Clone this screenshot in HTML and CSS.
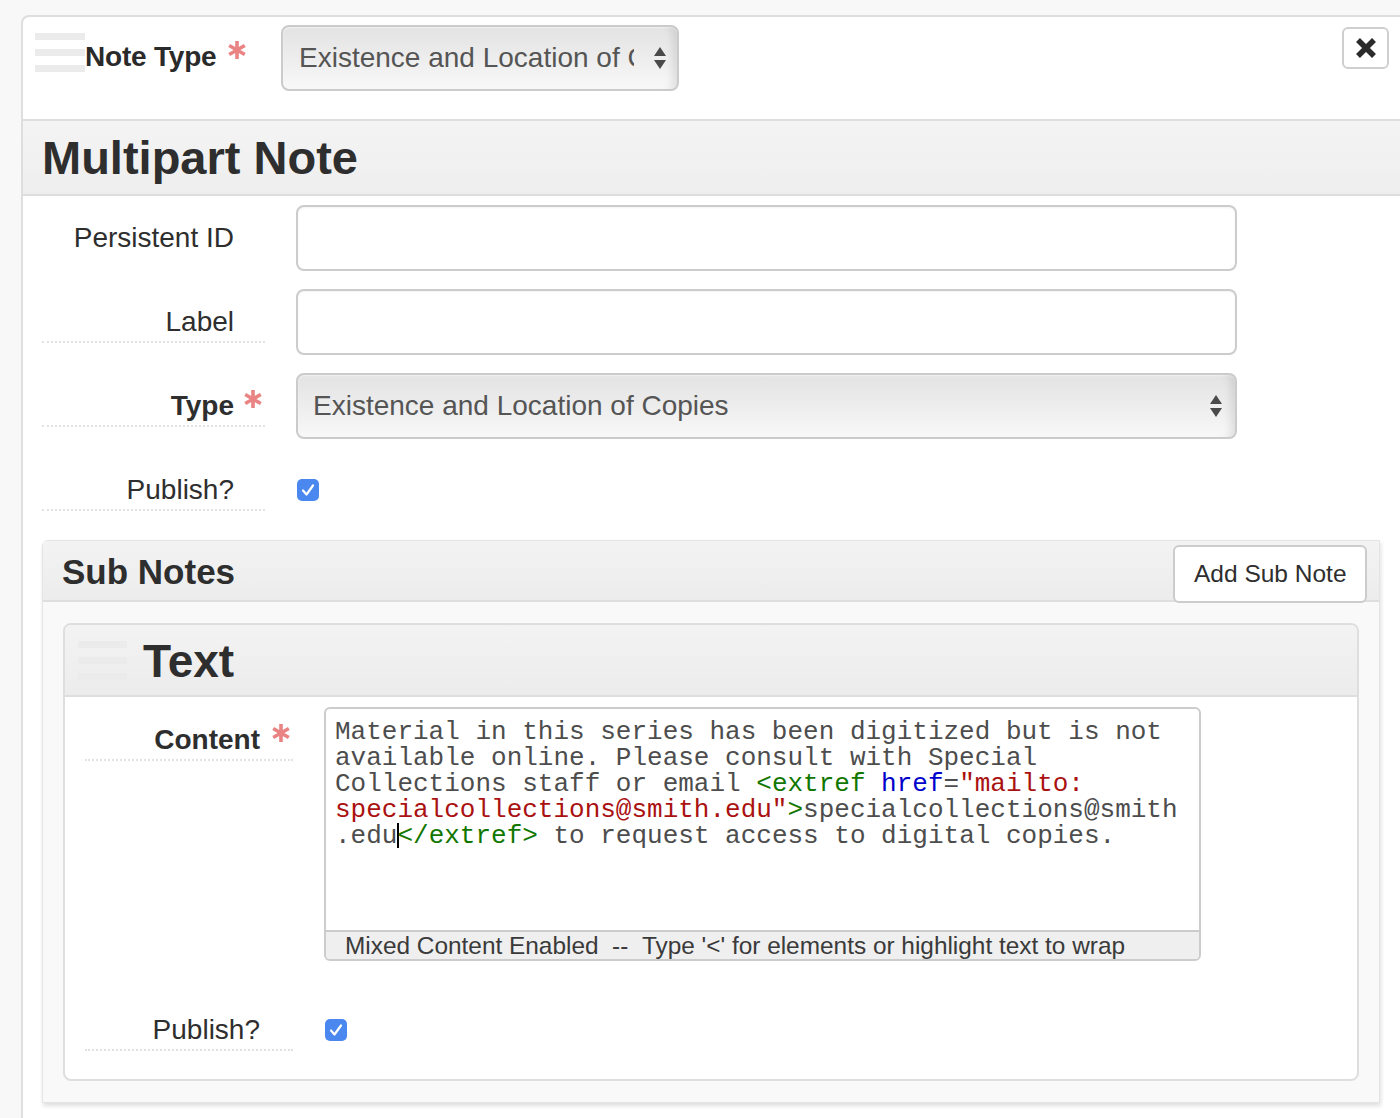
FILE: index.html
```html
<!DOCTYPE html>
<html lang="en">
<head>
<meta charset="utf-8">
<title>Multipart Note</title>
<link rel="stylesheet" href="styles.css">
</head>
<body>
<div class="panel">
  <div class="top">
    <div class="handle"><span></span><span></span><span></span></div>
    <div class="top-label">Note Type<svg class="star star-inline" width="18" height="18" viewBox="0 0 18 18"><path d="M9 0 V18 M1.2 4.5 L16.8 13.5 M1.2 13.5 L16.8 4.5"/></svg></div>
    <div class="select select-short">
      <span class="select-text">Existence and Location of Copies</span>
      <svg class="arrows" width="12" height="24" viewBox="0 0 12 24"><polygon points="0,10 6,1 12,10" /><polygon points="0,14 6,23 12,14" /></svg>
    </div>
    <button class="close" type="button" aria-label="Close">
      <svg width="22" height="22" viewBox="0 0 22 22"><path d="M3 3 L19 19 M19 3 L3 19" stroke="#2b2b2b" stroke-width="5.5" stroke-linecap="butt" fill="none"/></svg>
    </button>
  </div>

  <div class="mp-header"><h2>Multipart Note</h2></div>

  <div class="mp-body">
    <div class="row">
      <div class="lbl nodots">Persistent ID</div>
      <div class="input"></div>
    </div>
    <div class="row">
      <div class="lbl">Label</div>
      <div class="input"></div>
    </div>
    <div class="row">
      <div class="lbl bold">Type<svg class="star star-abs" width="18" height="18" viewBox="0 0 18 18"><path d="M9 0 V18 M1.2 4.5 L16.8 13.5 M1.2 13.5 L16.8 4.5"/></svg></div>
      <div class="select select-wide">
        <span class="select-text">Existence and Location of Copies</span>
        <svg class="arrows" width="12" height="24" viewBox="0 0 12 24"><polygon points="0,10 6,1 12,10" /><polygon points="0,14 6,23 12,14" /></svg>
      </div>
    </div>
    <div class="row">
      <div class="lbl">Publish?</div>
      <div class="cb"><svg width="22" height="22" viewBox="0 0 22 22"><path d="M6 11.5 L9.5 15.5 L16 6.5" stroke="#fff" stroke-width="2.2" fill="none" stroke-linecap="round" stroke-linejoin="round"/></svg></div>
    </div>

    <section class="subnotes">
      <div class="sn-header">
        <h3>Sub Notes</h3>
        <button class="btn" type="button">Add Sub Note</button>
      </div>
      <div class="sn-body">
        <div class="subrecord">
          <div class="sr-header">
            <div class="handle"><span></span><span></span><span></span></div>
            <h3>Text</h3>
          </div>
          <div class="sr-body">
            <div class="row row-content">
              <div class="lbl lbl-sm bold">Content<svg class="star star-abs" width="18" height="18" viewBox="0 0 18 18"><path d="M9 0 V18 M1.2 4.5 L16.8 13.5 M1.2 13.5 L16.8 4.5"/></svg></div>
              <div class="editor">
                <div class="code">
                  <div class="ln">Material in this series has been digitized but is not</div>
                  <div class="ln">available online. Please consult with Special</div>
                  <div class="ln">Collections staff or email <span class="tag">&lt;extref</span> <span class="attr">href</span>=<span class="str">"mailto:</span></div>
                  <div class="ln"><span class="str">specialcollections@smith.edu"</span><span class="tag">&gt;</span>specialcollections@smith</div>
                  <div class="ln">.edu<span class="cursor"></span><span class="tag">&lt;/extref&gt;</span> to request access to digital copies.</div>
                </div>
                <div class="editor-foot">Mixed Content Enabled &nbsp;-- &nbsp;Type '&lt;' for elements or highlight text to wrap</div>
              </div>
            </div>
            <div class="row row-last">
              <div class="lbl lbl-sm">Publish?</div>
              <div class="cb"><svg width="22" height="22" viewBox="0 0 22 22"><path d="M6 11.5 L9.5 15.5 L16 6.5" stroke="#fff" stroke-width="2.2" fill="none" stroke-linecap="round" stroke-linejoin="round"/></svg></div>
            </div>
          </div>
        </div>
      </div>
    </section>
  </div>
</div>
</body>
</html>
```

FILE: styles.css
```css
html, body {
  margin: 0;
  padding: 0;
}
body {
  background: #f8f8f8;
  font-family: "Liberation Sans", Arial, Helvetica, sans-serif;
  color: #333;
  overflow: hidden;
}

.panel {
  margin: 15px 0 0 21px;
  width: 1379px;
  box-sizing: border-box;
  background: #fff;
  border-top: 2px solid #dedede;
  border-left: 2px solid #dedede;
  border-top-left-radius: 8px;
  min-height: 1200px;
}

/* drag handle */
.handle {
  width: 50px;
  display: flex;
  flex-direction: column;
  gap: 9px;
  flex: none;
}
.handle span {
  display: block;
  height: 7px;
  background: #ebebeb;
}

/* required star */
.star {
  stroke: #ea8383;
  stroke-width: 3.6;
  fill: none;
}
.star-inline {
  display: inline-block;
  margin-left: 12px;
  vertical-align: top;
  position: relative;
  top: -1px;
}
.star-abs {
  position: absolute;
  right: 3px;
  top: 17px;
}

/* top row */
.top {
  height: 102px;
  border-bottom: 2px solid #dedede;
  display: flex;
  align-items: flex-start;
}
.top .handle {
  margin: 16px 0 0 12px;
}
.top-label {
  width: 196px;
  margin-top: 25px;
  font-size: 28px;
  line-height: 30px;
  font-weight: bold;
  color: #2a2a2a;
  white-space: nowrap;
  letter-spacing: -0.2px;
}

.select {
  box-sizing: border-box;
  height: 66px;
  border: 2px solid #cbcbcb;
  border-radius: 8px;
  background: linear-gradient(#e3e3e3, #eeeeee 55%, #f8f8f8);
  box-shadow: inset -10px 0 8px -6px rgba(0, 0, 0, 0.10), inset 0 1px 2px rgba(255,255,255,0.6);
  display: flex;
  align-items: center;
  font-size: 28px;
  color: #555;
  flex: none;
}
.select-text {
  white-space: nowrap;
  overflow: hidden;
}
.arrows {
  fill: #4a4a4a;
  margin-left: auto;
  flex: none;
}
.select-short {
  width: 398px;
  margin-top: 8px;
  padding: 0 11px 0 16px;
}
.select-short .select-text {
  width: 335px;
}
.select-wide {
  width: 941px;
  margin-left: 31px;
  padding: 0 13px 0 15px;
}

.close {
  margin: 10px 11px 0 auto;
  width: 47px;
  height: 42px;
  box-sizing: border-box;
  border: 2px solid #cfcfcf;
  border-radius: 6px;
  background: #fff;
  padding: 0;
  display: flex;
  align-items: center;
  justify-content: center;
}

/* Multipart header */
.mp-header {
  height: 73px;
  border-bottom: 2px solid #dedede;
  background: linear-gradient(#f4f4f4, #eeeeee);
  display: flex;
  align-items: center;
  padding-left: 19px;
}
.mp-header h2 {
  margin: 0;
  font-size: 47px;
  line-height: 50px;
  font-weight: bold;
  color: #2e2e2e;
}

.mp-body {
  padding: 9px 20px 0 19px;
}

/* form rows */
.row {
  display: flex;
  align-items: flex-start;
  margin-bottom: 18px;
}
.lbl {
  position: relative;
  width: 223px;
  height: 54px;
  box-sizing: border-box;
  padding: 18px 31px 0 0;
  text-align: right;
  font-size: 28px;
  line-height: 30px;
  color: #2e2e2e;
  border-bottom: 2px dotted #e2e2e2;
  flex: none;
  white-space: nowrap;
}
.lbl.nodots {
  border-bottom-color: transparent;
}
.lbl.bold {
  font-weight: bold;
}
.lbl-sm {
  width: 208px;
  padding-right: 33px;
}

.input {
  width: 941px;
  height: 66px;
  margin-left: 31px;
  box-sizing: border-box;
  border: 2px solid #cccccc;
  border-radius: 8px;
  background: #fff;
  box-shadow: inset 0 1px 2px rgba(0, 0, 0, 0.05);
}

.cb {
  width: 22px;
  height: 22px;
  margin: 22px 0 0 32px;
  border-radius: 5px;
  background: #4a87ee;
  flex: none;
}
.cb svg {
  display: block;
}

/* Sub notes */
.subnotes {
  margin-top: 29px;
  width: 1338px;
  box-sizing: border-box;
  border: 1px solid #e4e4e4;
  border-top-left-radius: 6px;
  background: #f9f9f9;
  box-shadow: 1px 3px 4px rgba(0, 0, 0, 0.13);
}
.sn-header {
  height: 59px;
  border-bottom: 2px solid #dedede;
  background: linear-gradient(#f3f3f3, #ececec);
  display: flex;
  align-items: flex-start;
  padding-left: 19px;
}
.sn-header h3 {
  margin: 0;
  font-size: 35px;
  line-height: 61px;
  font-weight: bold;
  color: #2e2e2e;
}
.btn {
  margin: 4px 12px 0 auto;
  height: 58px;
  padding: 0 19px;
  box-sizing: border-box;
  border: 2px solid #cccccc;
  border-radius: 6px;
  background: #fff;
  font-family: "Liberation Sans", Arial, sans-serif;
  font-size: 24.5px;
  color: #2e2e2e;
  width: 194px;
  white-space: nowrap;
}
.sn-body {
  padding: 21px 20px 21px 20px;
}

.subrecord {
  border: 2px solid #dedede;
  border-radius: 8px;
  background: #fff;
  overflow: hidden;
}
.sr-header {
  height: 70px;
  border-bottom: 2px solid #dedede;
  background: linear-gradient(#f3f3f3, #ececec);
  display: flex;
  align-items: flex-start;
}
.sr-header .handle {
  margin: 16px 0 0 13px;
  width: 49px;
}
.sr-header h3 {
  margin: 0 0 0 16px;
  font-size: 46px;
  line-height: 72px;
  font-weight: bold;
  color: #2e2e2e;
}
.sr-body {
  padding: 10px 20px 28px 20px;
}
.row-content {
  margin-bottom: 36px;
}
.row-last {
  margin-bottom: 0;
}

.editor {
  width: 877px;
  height: 254px;
  margin-left: 31px;
  box-sizing: border-box;
  border: 2px solid #cccccc;
  border-radius: 6px;
  display: flex;
  flex-direction: column;
  overflow: hidden;
  flex: none;
}
.code {
  flex: 1;
  padding: 10px 9px 0 9px;
  font-family: "Liberation Mono", "Courier New", monospace;
  font-size: 26px;
  line-height: 26px;
  color: #4d4d4d;
}
.ln {
  white-space: pre;
}
.tag { color: #117700; }
.attr { color: #0000cc; }
.str { color: #aa1111; }
.cursor {
  display: inline-block;
  width: 0;
  height: 25px;
  border-left: 2px solid #000;
  vertical-align: -5px;
  margin-right: -2px;
}
.editor-foot {
  height: 27px;
  border-top: 2px solid #cccccc;
  background: #efefef;
  padding-left: 19px;
  font-size: 24.4px;
  line-height: 27px;
  color: #3a3a3a;
  white-space: nowrap;
}
```
